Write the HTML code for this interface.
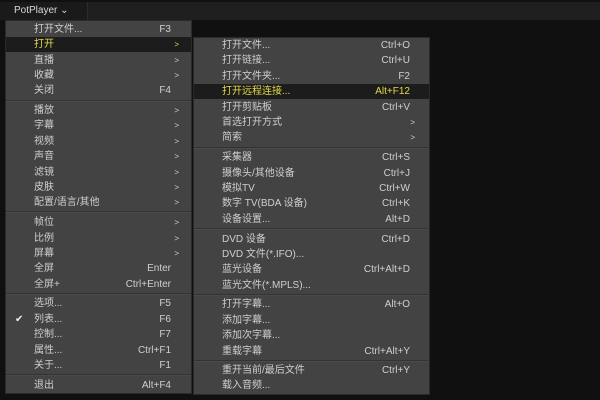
<!DOCTYPE html>
<html><head><meta charset="utf-8"><style>
*{margin:0;padding:0;box-sizing:border-box}
body{width:600px;height:400px;background:#101010;position:relative;overflow:hidden;font-family:"Liberation Sans","Noto Sans CJK SC",sans-serif;font-size:10px;color:#cfcfcf}
.top{position:absolute;left:0;top:2px;width:600px;height:18px;background:#1f1f1f}
.tab{position:absolute;left:0;top:2px;width:88px;height:18px;background:#1a1a1a;border-right:1px solid #2c2c2c;color:#d8d8d8;font-size:10px;line-height:18px;padding-left:14px}
.m{position:absolute;background:#434343;border:1px solid #2a2a2a}
.r{position:absolute;left:0;right:0;height:15px;line-height:15px}
.r .t{position:absolute}
.r .k{position:absolute;text-align:right}
.h{background:#1c1c1c;color:#e6d84a}
.s{position:absolute;left:0;right:0;height:2px;border-top:1px solid #333;border-bottom:1px solid #4a4a4a}
.a{font-size:8px}
#L .t{left:28px}#L .k{right:20px}#L .a{position:absolute;right:12px}
#R .t{left:28px}#R .k{right:19px}#R .a{position:absolute;right:14px}
</style></head><body>
<div class="top"></div>
<div class="tab">PotPlayer &#8964;</div>

<div class="m" id="L" style="left:5px;top:20px;width:187px;height:374px">
<div class="r" style="top:1px"><span class="t">打开文件...</span><span class="k">F3</span></div>
<div class="r h" style="top:16px"><span class="t">打开</span><span class="a">&gt;</span></div>
<div class="r" style="top:32px"><span class="t">直播</span><span class="a">&gt;</span></div>
<div class="r" style="top:47px"><span class="t">收藏</span><span class="a">&gt;</span></div>
<div class="r" style="top:62px"><span class="t">关闭</span><span class="k">F4</span></div>
<div class="s" style="top:79px"></div>
<div class="r" style="top:82px"><span class="t">播放</span><span class="a">&gt;</span></div>
<div class="r" style="top:97px"><span class="t">字幕</span><span class="a">&gt;</span></div>
<div class="r" style="top:113px"><span class="t">视频</span><span class="a">&gt;</span></div>
<div class="r" style="top:128px"><span class="t">声音</span><span class="a">&gt;</span></div>
<div class="r" style="top:144px"><span class="t">滤镜</span><span class="a">&gt;</span></div>
<div class="r" style="top:159px"><span class="t">皮肤</span><span class="a">&gt;</span></div>
<div class="r" style="top:174px"><span class="t">配置/语言/其他</span><span class="a">&gt;</span></div>
<div class="s" style="top:190px"></div>
<div class="r" style="top:194px"><span class="t">帧位</span><span class="a">&gt;</span></div>
<div class="r" style="top:210px"><span class="t">比例</span><span class="a">&gt;</span></div>
<div class="r" style="top:225px"><span class="t">屏幕</span><span class="a">&gt;</span></div>
<div class="r" style="top:240px"><span class="t">全屏</span><span class="k">Enter</span></div>
<div class="r" style="top:256px"><span class="t">全屏+</span><span class="k">Ctrl+Enter</span></div>
<div class="s" style="top:272px"></div>
<div class="r" style="top:275px"><span class="t">选项...</span><span class="k">F5</span></div>
<div class="r" style="top:291px"><span style="position:absolute;left:9px;color:#eee">&#10004;</span><span class="t">列表...</span><span class="k">F6</span></div>
<div class="r" style="top:306px"><span class="t">控制...</span><span class="k">F7</span></div>
<div class="r" style="top:322px"><span class="t">属性...</span><span class="k">Ctrl+F1</span></div>
<div class="r" style="top:337px"><span class="t">关于...</span><span class="k">F1</span></div>
<div class="s" style="top:353px"></div>
<div class="r" style="top:357px"><span class="t">退出</span><span class="k">Alt+F4</span></div>
</div>

<div class="m" id="R" style="left:193px;top:37px;width:237px;height:358px">
<div class="r" style="top:0px"><span class="t">打开文件...</span><span class="k">Ctrl+O</span></div>
<div class="r" style="top:15px"><span class="t">打开链接...</span><span class="k">Ctrl+U</span></div>
<div class="r" style="top:31px"><span class="t">打开文件夹...</span><span class="k">F2</span></div>
<div class="r h" style="top:46px"><span class="t">打开远程连接...</span><span class="k">Alt+F12</span></div>
<div class="r" style="top:62px"><span class="t">打开剪贴板</span><span class="k">Ctrl+V</span></div>
<div class="r" style="top:77px"><span class="t">首选打开方式</span><span class="a">&gt;</span></div>
<div class="r" style="top:92px"><span class="t">简索</span><span class="a">&gt;</span></div>
<div class="s" style="top:109px"></div>
<div class="r" style="top:112px"><span class="t">采集器</span><span class="k">Ctrl+S</span></div>
<div class="r" style="top:128px"><span class="t">摄像头/其他设备</span><span class="k">Ctrl+J</span></div>
<div class="r" style="top:143px"><span class="t">模拟TV</span><span class="k">Ctrl+W</span></div>
<div class="r" style="top:158px"><span class="t">数字 TV(BDA 设备)</span><span class="k">Ctrl+K</span></div>
<div class="r" style="top:174px"><span class="t">设备设置...</span><span class="k">Alt+D</span></div>
<div class="s" style="top:190px"></div>
<div class="r" style="top:194px"><span class="t">DVD 设备</span><span class="k">Ctrl+D</span></div>
<div class="r" style="top:209px"><span class="t">DVD 文件(*.IFO)...</span></div>
<div class="r" style="top:224px"><span class="t">蓝光设备</span><span class="k">Ctrl+Alt+D</span></div>
<div class="r" style="top:240px"><span class="t">蓝光文件(*.MPLS)...</span></div>
<div class="s" style="top:256px"></div>
<div class="r" style="top:259px"><span class="t">打开字幕...</span><span class="k">Alt+O</span></div>
<div class="r" style="top:275px"><span class="t">添加字幕...</span></div>
<div class="r" style="top:290px"><span class="t">添加次字幕...</span></div>
<div class="r" style="top:306px"><span class="t">重载字幕</span><span class="k">Ctrl+Alt+Y</span></div>
<div class="s" style="top:322px"></div>
<div class="r" style="top:325px"><span class="t">重开当前/最后文件</span><span class="k">Ctrl+Y</span></div>
<div class="r" style="top:340px"><span class="t">载入音频...</span></div>
</div>
</body></html>
